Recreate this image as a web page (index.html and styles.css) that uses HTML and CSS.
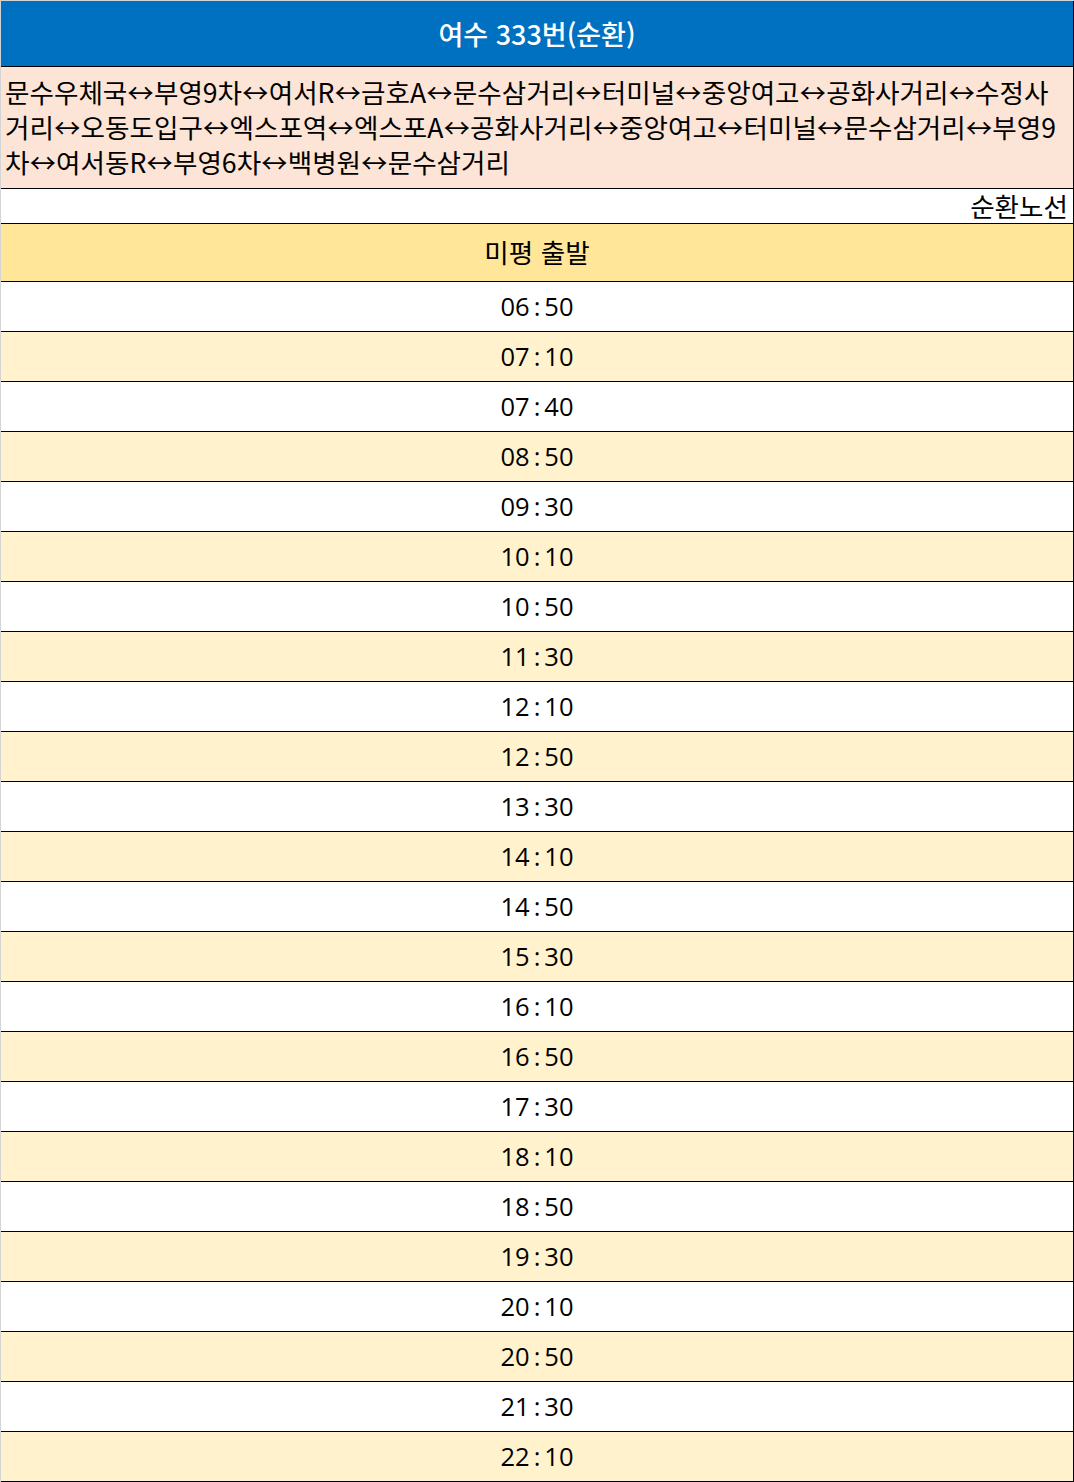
FILE: index.html
```html
<!DOCTYPE html>
<html lang="ko">
<head>
<meta charset="utf-8">
<title>여수 333번(순환)</title>
<link rel="stylesheet" href="styles.css">
</head>
<body>
<div class="sheet">
  <div class="title">여수 333번(순환)</div>
  <div class="route">문수우체국↔부영9차↔여서R↔금호A↔문수삼거리↔터미널↔중앙여고↔공화사거리↔수정사<br>거리↔오동도입구↔엑스포역↔엑스포A↔공화사거리↔중앙여고↔터미널↔문수삼거리↔부영9<br>차↔여서동R↔부영6차↔백병원↔문수삼거리</div>
  <div class="note">순환노선</div>
  <div class="colhead">미평 출발</div>
  <div class="times">
    <div class="t">06<span class="c">:</span>50</div>
    <div class="t alt">07<span class="c">:</span>10</div>
    <div class="t">07<span class="c">:</span>40</div>
    <div class="t alt">08<span class="c">:</span>50</div>
    <div class="t">09<span class="c">:</span>30</div>
    <div class="t alt">10<span class="c">:</span>10</div>
    <div class="t">10<span class="c">:</span>50</div>
    <div class="t alt">11<span class="c">:</span>30</div>
    <div class="t">12<span class="c">:</span>10</div>
    <div class="t alt">12<span class="c">:</span>50</div>
    <div class="t">13<span class="c">:</span>30</div>
    <div class="t alt">14<span class="c">:</span>10</div>
    <div class="t">14<span class="c">:</span>50</div>
    <div class="t alt">15<span class="c">:</span>30</div>
    <div class="t">16<span class="c">:</span>10</div>
    <div class="t alt">16<span class="c">:</span>50</div>
    <div class="t">17<span class="c">:</span>30</div>
    <div class="t alt">18<span class="c">:</span>10</div>
    <div class="t">18<span class="c">:</span>50</div>
    <div class="t alt">19<span class="c">:</span>30</div>
    <div class="t">20<span class="c">:</span>10</div>
    <div class="t alt">20<span class="c">:</span>50</div>
    <div class="t">21<span class="c">:</span>30</div>
    <div class="t alt">22<span class="c">:</span>10</div>
  </div>
</div>
</body>
</html>
```

FILE: styles.css
```css
html, body {
  margin: 0;
  padding: 0;
  background: #ffffff;
}
body {
  font-family: "Noto Sans CJK KR", "Noto Sans", sans-serif;
  color: #000;
}
.sheet {
  width: 1073px;
  border-top: 1px solid #d4d4d4;
  border-left: 1px solid #d4d4d4;
  display: flex;
  flex-direction: column;
}
.sheet > div,
.times > .t {
  border-right: 1px solid #000;
  border-bottom: 1px solid #000;
  box-sizing: border-box;
}
.times {
  border: none !important;
  display: flex;
  flex-direction: column;
}
.title {
  height: 66px;
  background: #0070c0;
  color: #fff;
  font-size: 27px;
  font-weight: 500;
  display: flex;
  align-items: center;
  justify-content: center;
}
.route {
  height: 122px;
  padding: 7px 0 0 4px;
  background: #fce4d6;
  font-size: 26.6px;
  line-height: 35px;
  white-space: nowrap;
  overflow: hidden;
}
.note {
  height: 35px;
  padding: 0 5px 2px 0;
  font-size: 26.6px;
  display: flex;
  align-items: center;
  justify-content: flex-end;
}
.colhead {
  height: 58px;
  padding-bottom: 2px;
  background: #ffe699;
  font-size: 26.6px;
  display: flex;
  align-items: center;
  justify-content: center;
}
.t {
  height: 50px;
  padding-bottom: 2px;
  font-family: "Open Sans", "Noto Sans", sans-serif;
  font-size: 25.5px;
  display: flex;
  align-items: center;
  justify-content: center;
  background: #fff;
}
.t .c {
  margin: 0 4px;
}
.t.alt {
  background: #fff2cc;
}
```
